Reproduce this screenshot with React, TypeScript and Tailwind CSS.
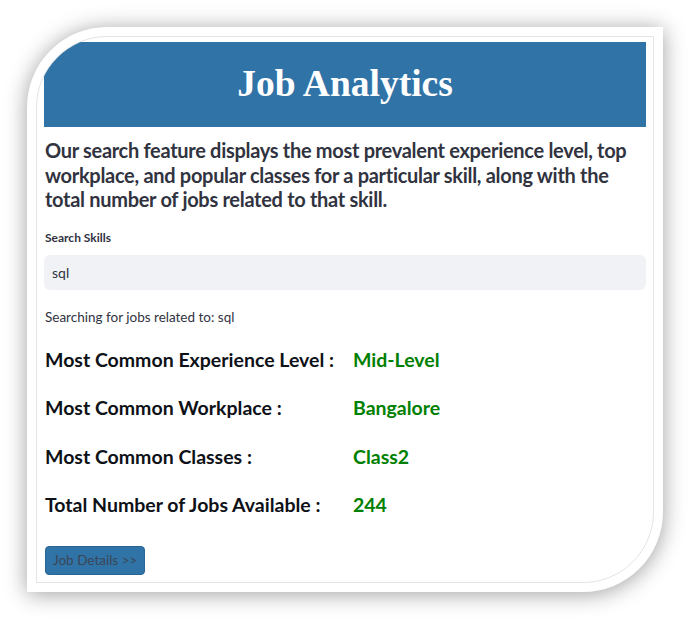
const SANS = "font-['Lato','Noto_Sans',sans-serif]";

const STATS = [
  { label: 'Most Common Experience Level :', value: 'Mid-Level' },
  { label: 'Most Common Workplace :', value: 'Bangalore' },
  { label: 'Most Common Classes :', value: 'Class2' },
  { label: 'Total Number of Jobs Available :', value: '244' },
];

export default function App() {
  return (
    <div className={`min-h-[619px] w-[690px] bg-white p-[27px] ${SANS}`}>
      <div className="rounded-tl-[80px] rounded-br-[80px] bg-white p-[9px] shadow-[0_2px_22px_rgba(0,0,0,0.38)]">
        <div className="overflow-hidden rounded-tl-[71px] rounded-br-[71px] border border-[#e4e4e4] px-[7px] pt-[5px] pb-[7px]">
          <div className="flex h-[85px] items-center justify-center bg-[#3073a7]">
            <h1 className="font-['Liberation_Serif','Times_New_Roman',serif] text-[37.5px] font-bold text-white">
              Job Analytics
            </h1>
          </div>

          <p className="mt-[11px] pl-[1px] text-[20px] font-bold leading-[24.5px] tracking-[-0.3px] text-[#31333f]">
            Our search feature displays the most prevalent experience level, top workplace, and popular classes for a
            particular skill, along with the total number of jobs related to that skill.
          </p>

          <label className="mt-[17px] block pl-[1px] text-[12px] font-bold text-[#31333f]">Search Skills</label>
          <div className="mt-[8px] flex h-[35px] items-center rounded-[6px] bg-[#f0f2f6] px-[8px] text-[14px] text-[#31333f]">
            sql
          </div>

          <p className="mt-[17px] pl-[1px] text-[13.5px] text-[#31333f]">Searching for jobs related to: sql</p>

          <div className="mt-[20px] flex flex-col gap-[23.5px] pl-[1px]">
            {STATS.map((s) => (
              <div key={s.label} className="grid grid-cols-[308px_1fr] text-[19.5px] font-bold leading-[25px]">
                <span className="text-[#0e1117]">{s.label}</span>
                <span className="text-[#008000]">{s.value}</span>
              </div>
            ))}
          </div>

          <button className="mt-[29px] ml-[1px] h-[29px] rounded-[4px] border border-[#2a6597] bg-[#3073a7] px-[7px] text-[13.5px] leading-none text-[#3a4656]">
            Job Details &gt;&gt;
          </button>
        </div>
      </div>
    </div>
  );
}
